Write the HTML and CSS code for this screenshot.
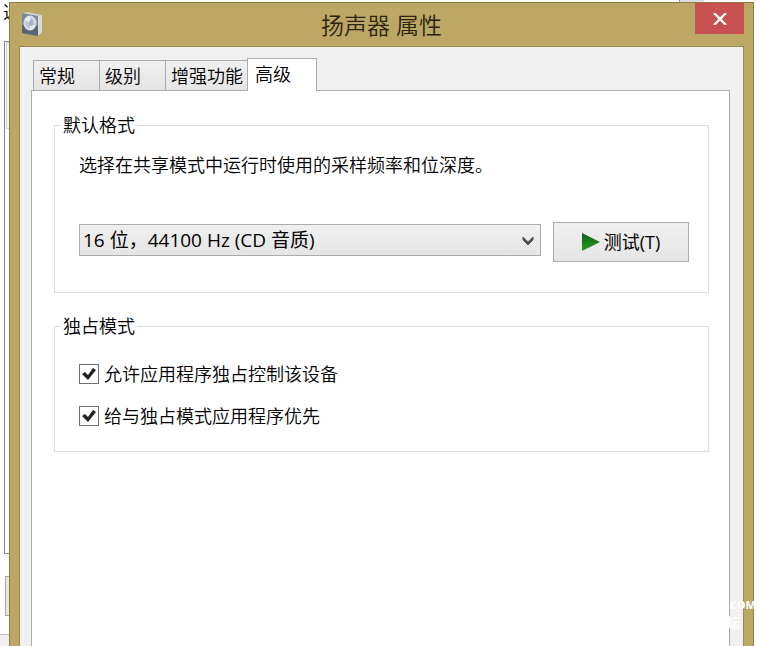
FILE: index.html
```html
<!DOCTYPE html>
<html lang="zh-CN">
<head>
  <meta charset="UTF-8" />
  <title>扬声器 属性</title>
  <link rel="stylesheet" href="styles.css">
</head>
<body>
  <!-- ventana de sonido que queda detrás -->
  <div class="behind" aria-hidden="true">
    <span class="behind-text">选</span>
    <div class="behind-list"><div class="behind-item"></div></div>
    <div class="behind-button"></div>
    <div class="behind-footer"></div>
    <div class="behind-close"></div>
  </div>

  <main class="window">
    <header class="titlebar">
      <svg class="speaker" viewBox="0 0 22 26" aria-hidden="true">
        <path d="M1 1 L17 2 L17 24 L1 21 Z" fill="#7c8a98" />
        <path d="M1 13 L17 14 L17 24 L1 21 Z" fill="#56677a" />
        <path d="M1 1 L7 0 L21 3 L17 4 Z" fill="#cfd4d3" />
        <path d="M17 4 L21 3 L21 20 L17 24 Z" fill="#d9dcd8" />
        <ellipse cx="9" cy="11" rx="6.5" ry="7.5" fill="#d3dde5" />
        <ellipse cx="9" cy="11" rx="4.5" ry="5.5" fill="#bccad6" />
        <path d="M9 11 L4 8 Q6 4 9 4 Z M9 11 L14 14 Q12 18 9 18 Z" fill="#e6edf1" />
        <ellipse cx="10" cy="11" rx="2" ry="3" fill="#a5b4c2" />
      </svg>
      <h1>扬声器 属性</h1>
      <button class="close" type="button" aria-label="关闭">
        <svg viewBox="0 0 14 12" aria-hidden="true">
          <path d="M1 0 L13 12 M13 0 L1 12" stroke="#fff" stroke-width="2.4" />
        </svg>
      </button>
    </header>

    <div class="client">
      <div class="tabs" role="tablist">
        <button class="tab" type="button" role="tab">常规</button>
        <button class="tab" type="button" role="tab">级别</button>
        <button class="tab tab-wide" type="button" role="tab">增强功能</button>
        <button class="tab active" type="button" role="tab" aria-selected="true">高级</button>
      </div>

      <section class="page" role="tabpanel">
        <fieldset class="format">
          <legend>默认格式</legend>
          <label for="format">选择在共享模式中运行时使用的采样频率和位深度。</label>
          <div class="format-row">
            <div class="select">
              <select id="format">
                <option>16 位，44100 Hz (CD 音质)</option>
              </select>
              <svg viewBox="0 0 12 10" aria-hidden="true">
                <path d="M1 1 L6 6 L11 1 V4 L6 9 L1 4 Z" fill="#555" stroke="#555" />
              </svg>
            </div>
            <button class="test" type="button">
              <svg viewBox="0 0 18 18" aria-hidden="true">
                <defs>
                  <linearGradient id="play" x1="0" y1="0" x2="0" y2="1">
                    <stop offset="0" stop-color="#0d6413" />
                    <stop offset="1" stop-color="#2a9a26" />
                  </linearGradient>
                </defs>
                <path d="M0 0 L18 9 L0 18 Z" fill="url(#play)" />
              </svg>
              测试(T)
            </button>
          </div>
        </fieldset>

        <fieldset class="exclusive">
          <legend>独占模式</legend>
          <label class="check"><input type="checkbox" checked>允许应用程序独占控制该设备</label>
          <label class="check"><input type="checkbox" checked>给与独占模式应用程序优先</label>
        </fieldset>
      </section>
    </div>
  </main>

  <div class="watermark" aria-hidden="true">
    <span>.COM</span>
    <span class="watermark-name">坛</span>
  </div>
</body>
</html>
```

FILE: styles.css
```css
* {
  box-sizing: border-box;
}
body {
  position: relative;
  display: flex;
  min-height: 100vh;
  margin: 0;
  padding: 2px 6px 0 9px;
  overflow: hidden;
  background: #fff;
  color: #000;
  font-family: "Open Sans", "Noto Sans CJK SC", sans-serif;
  font-size: 18px;
  font-weight: 350;
  line-height: 24px;
}
button, select {
  font: inherit;
  color: inherit;
}

/* ventana de atrás */
.behind {
  position: absolute;
  inset: 0;
}
.behind-text {
  position: absolute;
  top: 0;
  left: 3px;
}
.behind-list {
  position: absolute;
  top: 41px;
  left: 4px;
  width: 40px;
  height: 513px;
  padding-left: 1px;
  border: 1px solid #83868c;
}
.behind-item {
  height: 87px;
  border: 1px solid #d5d5d5;
  background: #f4f4f4;
}
.behind-button {
  position: absolute;
  top: 576px;
  left: 5px;
  width: 40px;
  height: 40px;
  border: 1px solid #aaa;
  background: #e8e6e4;
}
.behind-footer {
  position: absolute;
  top: 634px;
  left: 0;
  width: 40px;
  bottom: 0;
  border-top: 1px solid #bbb;
  background: #f0f0f0;
}
.behind-close {
  position: absolute;
  top: 0;
  right: 56px;
  width: 25px;
  height: 4px;
  border-left: 1px solid #999;
  background: #ddd;
}

.window {
  position: relative;
  display: flex;
  flex-direction: column;
  flex: 1;
  padding: 0 9px;
  border: 1px solid #8f7d45;
  border-bottom: 0;
  background: #bda764;
}
.titlebar {
  display: grid;
  grid-template-columns: 49px 1fr 49px;
  align-items: start;
  height: 43px;
}
.speaker {
  width: 22px;
  height: 26px;
  margin: 9px 0 0 2px;
}
h1 {
  margin: 0;
  font-size: 23px;
  font-weight: inherit;
  line-height: 44px;
  text-align: center;
  color: #2b2410;
}
.close {
  display: flex;
  align-items: center;
  justify-content: center;
  height: 31px;
  padding: 0;
  border: 0;
  background: #c75050;
}
.close svg {
  width: 14px;
  height: 12px;
}

.client {
  display: flex;
  flex-direction: column;
  flex: 1;
  padding: 11px 13px 0 11px;
  border: 1px solid #9a8850;
  border-bottom: 0;
  background: #f0f0f0;
}
.tabs {
  display: flex;
  align-items: flex-end;
  padding-left: 2px;
}
.tab {
  width: 67px;
  height: 30px;
  margin-right: -1px;
  padding: 0 5px;
  border: 1px solid #acacac;
  border-bottom: 0;
  background: linear-gradient(#f0f0f0, #e5e5e5);
  text-align: left;
  white-space: nowrap;
}
.tab-wide {
  width: 83px;
}
.tab.active {
  position: relative;
  width: 70px;
  height: 33px;
  margin-bottom: -1px;
  padding: 0 7px 2px;
  background: #fff;
}
.page {
  flex: 1;
  padding: 24px 20px 0 22px;
  border: 1px solid #acacac;
  border-bottom: 0;
  background: #fff;
}

fieldset {
  min-width: 0;
  margin: 0 0 23px;
  border: 1px solid #dcdcdc;
}
legend {
  margin-left: -18px;
  padding: 0 2px;
  line-height: 20px;
}
.format {
  padding: 18px 19px 30px 24px;
}
.format label {
  display: block;
}
.format-row {
  display: flex;
  align-items: flex-start;
  gap: 12px;
  margin-top: 45px;
  font-weight: 400;
}
.select {
  position: relative;
  flex: 1;
  padding-top: 2px;
}
select {
  display: block;
  width: 100%;
  height: 32px;
  padding: 0 30px 0 3px;
  border: 1px solid #acacac;
  border-radius: 0;
  background: linear-gradient(#f0f0f0, #e5e5e5);
  font-size: 19px;
  appearance: none;
}
.select svg {
  position: absolute;
  top: 14px;
  right: 7px;
  width: 12px;
  height: 10px;
  pointer-events: none;
}
.test {
  display: flex;
  align-items: center;
  justify-content: center;
  gap: 4px;
  width: 136px;
  height: 40px;
  padding: 0;
  border: 1px solid #acacac;
  background: linear-gradient(#f0f0f0, #e5e5e5);
}
.test svg {
  width: 18px;
  height: 18px;
}

.exclusive {
  display: flex;
  flex-direction: column;
  gap: 18px;
  padding: 26px 24px 23px;
}
.check {
  display: flex;
  align-items: center;
  gap: 5px;
}
.check input {
  width: 20px;
  height: 20px;
  margin: 0;
  border: 1px solid #707070;
  background: #fff;
  appearance: none;
}
.check input:checked::before {
  content: "";
  display: block;
  width: 18px;
  height: 18px;
  background: #222;
  clip-path: polygon(2px 9px, 5px 7px, 8px 10px, 13px 3px, 16px 5px, 8px 15px);
}

.watermark {
  position: absolute;
  right: 4px;
  bottom: 14px;
  display: flex;
  flex-direction: column;
  color: #fff;
  font-size: 11px;
  font-weight: bold;
  line-height: 18px;
}
.watermark-name {
  font-size: 14px;
}
```
